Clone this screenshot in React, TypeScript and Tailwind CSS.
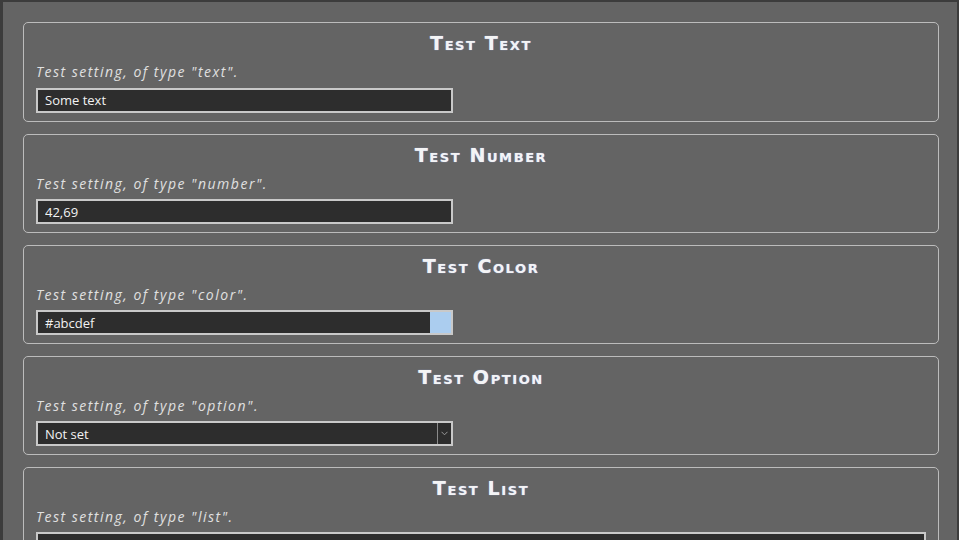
import type { ReactNode } from 'react';

// Settings panel: one bordered card per setting, title + description + control.

type Setting = {
  title: string;
  type: string;
  control: ReactNode;
};

const inputBase =
  'h-[25px] border-2 border-[#c9c9c9] bg-[#2d2d2d] px-[7px] text-[13px] leading-[20px] text-[#f2f2f2] outline-none font-["Open_Sans",sans-serif]';

function TextControl({ value }: { value: string }) {
  return <input className={`${inputBase} w-[417px]`} defaultValue={value} readOnly />;
}

function ColorControl({ value }: { value: string }) {
  return (
    <div className="flex w-[417px]">
      <input className={`${inputBase} min-w-0 flex-1 border-r-0`} defaultValue={value} readOnly />
      <div className="h-[25px] w-[23px] border-2 border-l-0 border-[#c9c9c9] bg-[#abcdef]" />
    </div>
  );
}

function OptionControl({ value }: { value: string }) {
  return (
    <div className={`${inputBase} flex w-[417px] items-center pr-0`}>
      <span className="flex-1">{value}</span>
      <span className="flex h-full w-[14px] items-center justify-center border-l border-[#8a8a8a]">
        <svg width="7" height="5" viewBox="0 0 7 5" className="text-[#9a9a9a]">
          <path d="M0.5 0.8 L3.5 3.8 L6.5 0.8" fill="none" stroke="currentColor" strokeWidth="1" />
        </svg>
      </span>
    </div>
  );
}

// The list editor sits a little lower than the single-line inputs.
function ListControl() {
  return <div className="mt-[5px] h-[60px] w-full border-2 border-[#c9c9c9] bg-[#2d2d2d]" />;
}

const SETTINGS: Setting[] = [
  { title: 'Test Text', type: 'text', control: <TextControl value="Some text" /> },
  { title: 'Test Number', type: 'number', control: <TextControl value="42,69" /> },
  { title: 'Test Color', type: 'color', control: <ColorControl value="#abcdef" /> },
  { title: 'Test Option', type: 'option', control: <OptionControl value="Not set" /> },
  { title: 'Test List', type: 'list', control: <ListControl /> },
];

function SettingCard({ setting }: { setting: Setting }) {
  return (
    <section className="rounded-[5px] border border-[#bcbcbc] px-3 pb-[8px] pt-[8px]">
      <h2
        className="text-center text-[19px] font-bold leading-[24px] tracking-[1.6px] text-[#f4f4f4] [font-variant:small-caps] font-['DejaVu_Sans',sans-serif] [text-shadow:0_0_1px_#9fb8ff]"
      >
        {setting.title}
      </h2>
      <p className="mt-[8px] text-[14px] italic leading-[18px] tracking-[1.5px] text-[#e0e0e0] font-['Open_Sans',sans-serif]">
        Test setting, of type "{setting.type}".
      </p>
      <div className="mt-[6px]">{setting.control}</div>
    </section>
  );
}

export default function App() {
  return (
    <div className="h-[540px] overflow-hidden border-l-[3px] border-r-[2px] border-t-2 border-[#3c3c3c] bg-[#646464] pl-[20px] pr-[18px] pt-[20px]">
      <div className="flex flex-col gap-[12px]">
        {SETTINGS.map((s) => (
          <SettingCard key={s.title} setting={s} />
        ))}
      </div>
    </div>
  );
}
